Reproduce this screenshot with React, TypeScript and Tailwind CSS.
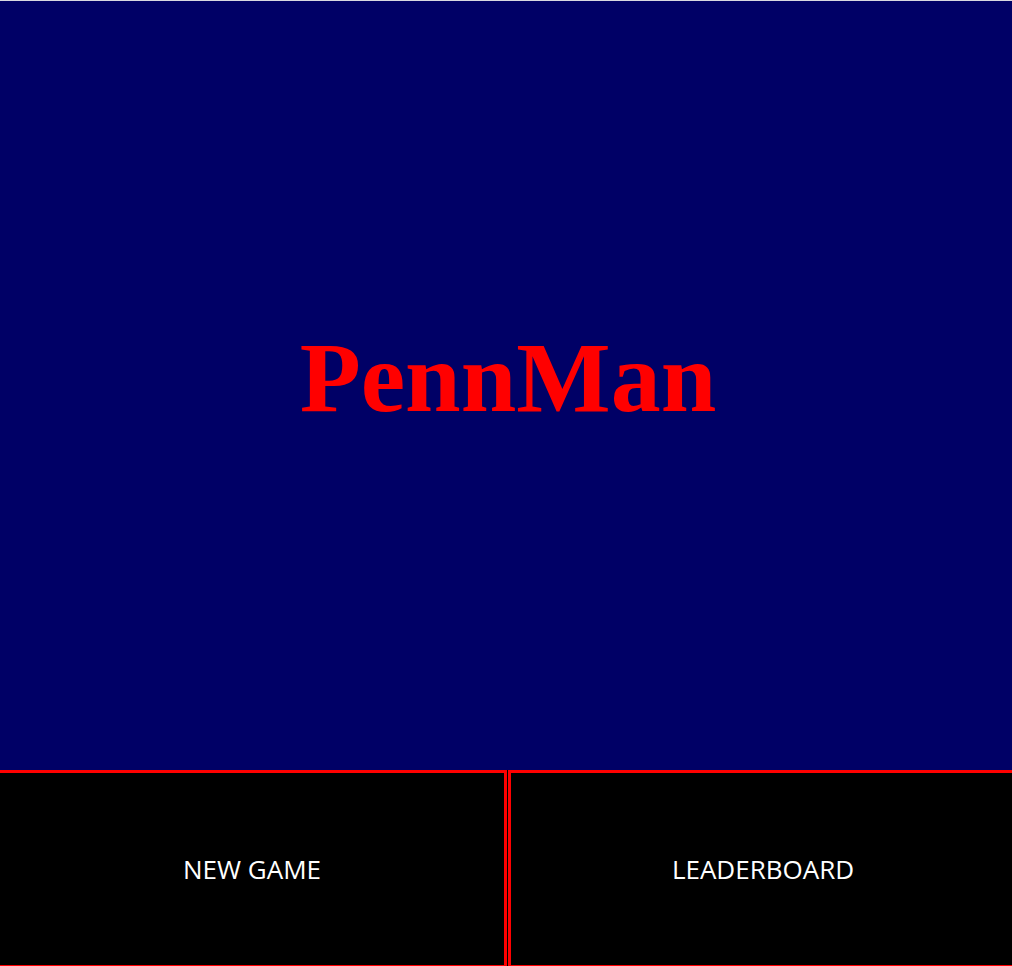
export default function App() {
  return (
    <div className="h-[966px] w-[1012px] overflow-hidden bg-black">
      <div className="h-px bg-[#d8d8e0]" />
      <div className="flex h-[769px] items-center justify-center bg-[#000066]">
        <h1
          className="mb-[16px] ml-[4px] text-[100px] font-bold leading-none text-[#ff0000]"
          style={{ fontFamily: '"Liberation Serif", "Times New Roman", serif' }}
        >
          PennMan
        </h1>
      </div>
      <div className="-ml-[3px] flex gap-px">
        {['NEW GAME', 'LEADERBOARD'].map((label) => (
          <button
            key={label}
            className="flex h-[198px] w-[510px] shrink-0 items-center justify-center border-[3px] border-[#ff0000] bg-black text-[26px] text-white"
            style={{ fontFamily: '"Open Sans", "Noto Sans", sans-serif' }}
          >
            {label}
          </button>
        ))}
      </div>
    </div>
  );
}
